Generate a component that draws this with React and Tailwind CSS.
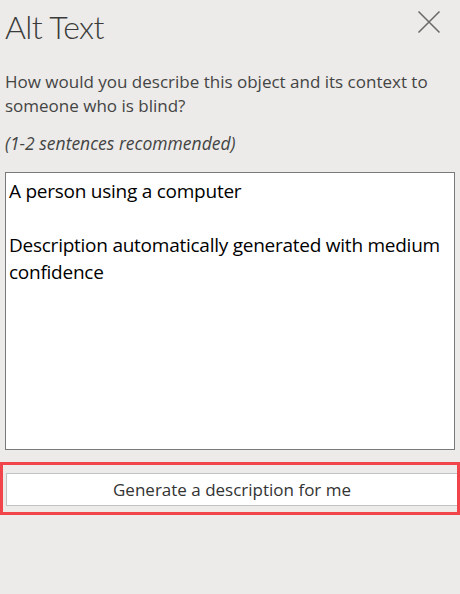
export default function App() {
  return (
    <div className="w-[460px] h-[594px] bg-[#ecebe9] flex flex-col" style={{ fontFamily: '"Open Sans", "Noto Sans", sans-serif' }}>
      <div className="flex justify-between items-start pl-[5px] pr-[19px] pt-[6px]">
        <h1 className="text-[32px] leading-[42px] font-light tracking-[-0.6px] text-[#3b3b3b]" style={{ fontFamily: 'Lato, "Open Sans", sans-serif' }}>Alt Text</h1>
        <svg width="24" height="24" viewBox="0 0 24 24" className="mt-[4px]" fill="none" stroke="#6b6b6b" strokeWidth="1.6">
          <path d="M1.5 1.5 L22.5 22.5 M22.5 1.5 L1.5 22.5" />
        </svg>
      </div>
      <p className="px-[5px] mt-[22px] text-[17px] leading-[24px] text-[#444]">
        How would you describe this object and its context to someone who is blind?
      </p>
      <p className="px-[5px] mt-[13px] text-[17.5px] leading-[24px] italic text-[#444]">(1-2 sentences recommended)</p>
      <div className="mx-[5px] mt-[17px] h-[278px] bg-white border border-[#7a7a7a] px-[3px] pt-[5px] text-[19px] leading-[27px] tracking-[-0.25px] text-black">
        <div>A person using a computer</div>
        <div className="h-[27px]"></div>
        <div>Description automatically generated with medium confidence</div>
      </div>
      <div className="mt-[12px] h-[53px] border-[3px] border-[#f2444b] flex pl-[3px] pt-[8px]">
        <button className="flex-1 h-[33px] bg-white border border-r-0 border-[#c2c2c2] text-[17px] text-[#333]">
          Generate a description for me
        </button>
      </div>
    </div>
  );
}
